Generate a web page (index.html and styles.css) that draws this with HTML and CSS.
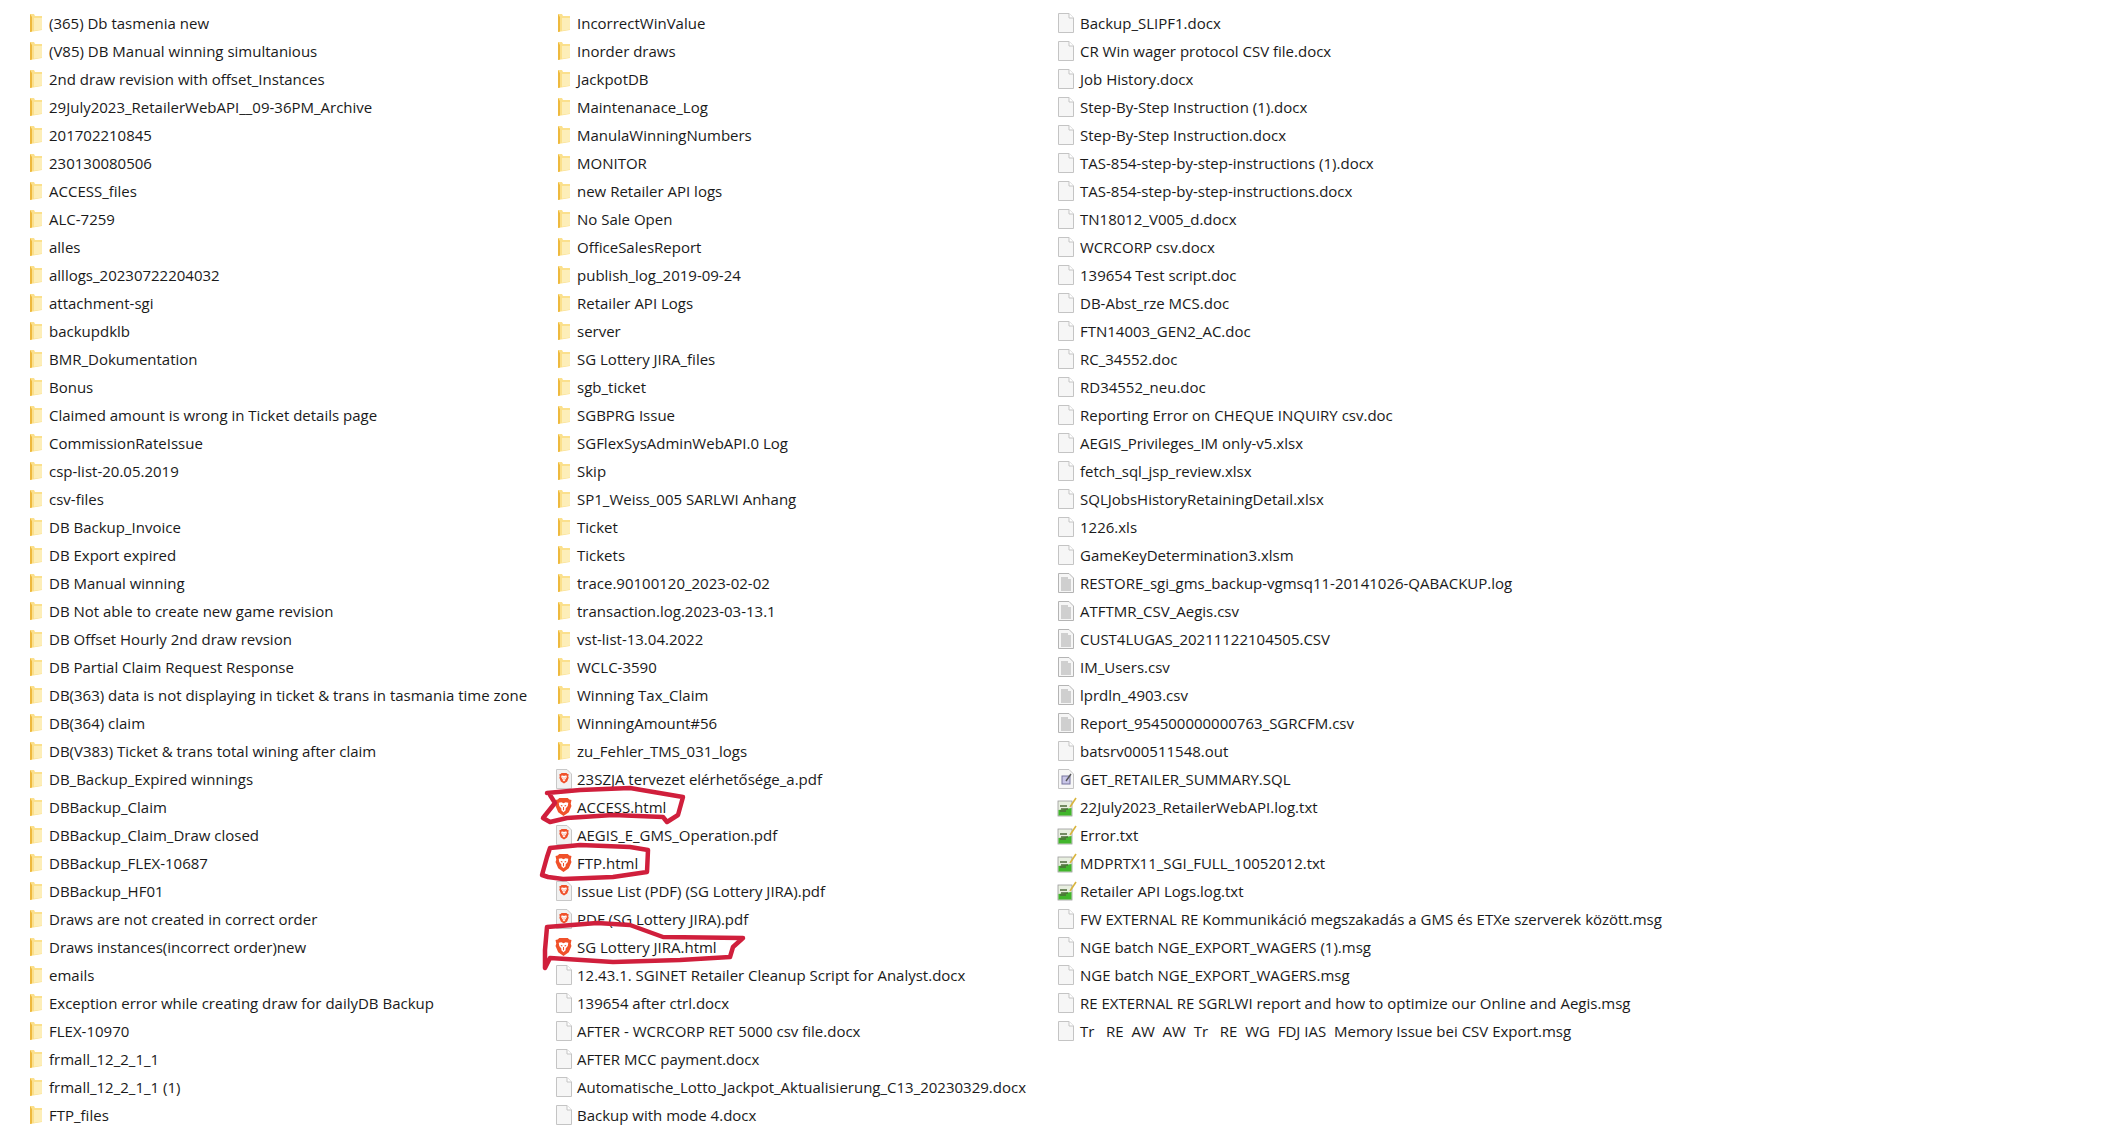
FILE: index.html
```html
<!DOCTYPE html>
<html lang="en">
<head>
    <meta charset="UTF-8">
    <title>Files</title>
    <link rel="stylesheet" href="styles.css">
</head>
<body>

<svg class="defs" width="0" height="0">
    <symbol id="folder" viewBox="0 0 14 20">
        <path d="M1 1 L5 1 L6 3 L13 3 L13 17 L1 19 Z" fill="#fbe08c"/>
        <path d="M1 1 L1 19 L3 18.6 L3 4 L1 1 Z" fill="#eeb93e"/>
        <path d="M5 5 L13 5 L13 16.5 L5 17.8 Z" fill="#fdeeb8"/>
    </symbol>
    <symbol id="doc" viewBox="0 0 16 20">
        <path d="M.5.5 H11 L15.5 5 V19.5 H.5 Z" fill="#f6f6f6" stroke="#c4c4c4"/>
        <path d="M11 .5 V5 H15.5" fill="#fff" stroke="#c4c4c4"/>
    </symbol>
    <symbol id="lines" viewBox="0 0 16 20">
        <path d="M.5.5 H11 L15.5 5 V19.5 H.5 Z" fill="#f6f6f6" stroke="#b4b4b4"/>
        <path d="M3 5 H10 M3 7 H13 M3 9 H13 M3 11 H13 M3 13 H13 M3 15 H13 M3 17 H13" stroke="#a8a8a8"/>
    </symbol>
    <symbol id="sql" viewBox="0 0 16 20">
        <path d="M.5.5 H11 L15.5 5 V19.5 H.5 Z" fill="#f6f6f6" stroke="#c4c4c4"/>
        <rect x="4" y="7" width="8" height="8" fill="#c9c6e8" stroke="#77749e"/>
        <path d="M8 12 L13 5" stroke="#555" stroke-width="1.4"/>
    </symbol>
    <symbol id="shield" viewBox="0 0 16 18">
        <path d="M4 .5 H12 L13.5 2 L15.5 2.5 L14.8 6 L15.5 8 L13 14 L8 17.5 L3 14 L.5 8 L1.2 6 L.5 2.5 L2.5 2 Z" fill="#f0512a"/>
        <path d="M3.5 5 L6 4.5 L8 5.5 L10 4.5 L12.5 5 L12 8 L10 10.5 L10 12 L8 14 L6 12 L6 10.5 L4 8 Z" fill="#fff"/>
        <path d="M5.5 7.5 L7 8 M10.5 7.5 L9 8 M8 9 V12" stroke="#f0512a"/>
    </symbol>
    <symbol id="pdf" viewBox="0 0 16 20">
        <path d="M.5.5 H11 L15.5 5 V19.5 H.5 Z" fill="#f1f1f1" stroke="#c8c8c8"/>
        <use href="#shield" x="3" y="3.5" width="10" height="11.5"/>
    </symbol>
    <symbol id="txt" viewBox="0 0 20 20">
        <rect x="1" y="4" width="14" height="15" fill="#e8efe0" stroke="#9a9a9a" stroke-width=".8"/>
        <path d="M1.5 13 L14.5 11 V18.5 H1.5 Z" fill="#41b52c"/>
        <path d="M3 9 H10 M4 12 H11 M3 14 H9" stroke="#4d6b3a" stroke-width="1.3"/>
        <path d="M13 10 L19 1" stroke="#d9b53e" stroke-width="1.6"/>
    </symbol>
</svg>

<main class="columns">
    <ul class="col col-one">
        <li><svg class="ico"><use href="#folder"/></svg>(365) Db tasmenia new</li>
        <li><svg class="ico"><use href="#folder"/></svg>(V85) DB Manual winning simultanious</li>
        <li><svg class="ico"><use href="#folder"/></svg>2nd draw revision with offset_Instances</li>
        <li><svg class="ico"><use href="#folder"/></svg>29July2023_RetailerWebAPI__09-36PM_Archive</li>
        <li><svg class="ico"><use href="#folder"/></svg>201702210845</li>
        <li><svg class="ico"><use href="#folder"/></svg>230130080506</li>
        <li><svg class="ico"><use href="#folder"/></svg>ACCESS_files</li>
        <li><svg class="ico"><use href="#folder"/></svg>ALC-7259</li>
        <li><svg class="ico"><use href="#folder"/></svg>alles</li>
        <li><svg class="ico"><use href="#folder"/></svg>alllogs_20230722204032</li>
        <li><svg class="ico"><use href="#folder"/></svg>attachment-sgi</li>
        <li><svg class="ico"><use href="#folder"/></svg>backupdklb</li>
        <li><svg class="ico"><use href="#folder"/></svg>BMR_Dokumentation</li>
        <li><svg class="ico"><use href="#folder"/></svg>Bonus</li>
        <li><svg class="ico"><use href="#folder"/></svg>Claimed amount is wrong in Ticket details page</li>
        <li><svg class="ico"><use href="#folder"/></svg>CommissionRateIssue</li>
        <li><svg class="ico"><use href="#folder"/></svg>csp-list-20.05.2019</li>
        <li><svg class="ico"><use href="#folder"/></svg>csv-files</li>
        <li><svg class="ico"><use href="#folder"/></svg>DB Backup_Invoice</li>
        <li><svg class="ico"><use href="#folder"/></svg>DB Export expired</li>
        <li><svg class="ico"><use href="#folder"/></svg>DB Manual winning</li>
        <li><svg class="ico"><use href="#folder"/></svg>DB Not able to create new game revision</li>
        <li><svg class="ico"><use href="#folder"/></svg>DB Offset Hourly 2nd draw revsion</li>
        <li><svg class="ico"><use href="#folder"/></svg>DB Partial Claim Request Response</li>
        <li><svg class="ico"><use href="#folder"/></svg>DB(363) data is not displaying in ticket &amp; trans in tasmania time zone</li>
        <li><svg class="ico"><use href="#folder"/></svg>DB(364) claim</li>
        <li><svg class="ico"><use href="#folder"/></svg>DB(V383) Ticket &amp; trans total wining after claim</li>
        <li><svg class="ico"><use href="#folder"/></svg>DB_Backup_Expired winnings</li>
        <li><svg class="ico"><use href="#folder"/></svg>DBBackup_Claim</li>
        <li><svg class="ico"><use href="#folder"/></svg>DBBackup_Claim_Draw closed</li>
        <li><svg class="ico"><use href="#folder"/></svg>DBBackup_FLEX-10687</li>
        <li><svg class="ico"><use href="#folder"/></svg>DBBackup_HF01</li>
        <li><svg class="ico"><use href="#folder"/></svg>Draws are not created in correct order</li>
        <li><svg class="ico"><use href="#folder"/></svg>Draws instances(incorrect order)new</li>
        <li><svg class="ico"><use href="#folder"/></svg>emails</li>
        <li><svg class="ico"><use href="#folder"/></svg>Exception error while creating draw for dailyDB Backup</li>
        <li><svg class="ico"><use href="#folder"/></svg>FLEX-10970</li>
        <li><svg class="ico"><use href="#folder"/></svg>frmall_12_2_1_1</li>
        <li><svg class="ico"><use href="#folder"/></svg>frmall_12_2_1_1 (1)</li>
        <li><svg class="ico"><use href="#folder"/></svg>FTP_files</li>
    </ul>

    <ul class="col col-two">
        <li><svg class="ico"><use href="#folder"/></svg>IncorrectWinValue</li>
        <li><svg class="ico"><use href="#folder"/></svg>Inorder draws</li>
        <li><svg class="ico"><use href="#folder"/></svg>JackpotDB</li>
        <li><svg class="ico"><use href="#folder"/></svg>Maintenanace_Log</li>
        <li><svg class="ico"><use href="#folder"/></svg>ManulaWinningNumbers</li>
        <li><svg class="ico"><use href="#folder"/></svg>MONITOR</li>
        <li><svg class="ico"><use href="#folder"/></svg>new Retailer API logs</li>
        <li><svg class="ico"><use href="#folder"/></svg>No Sale Open</li>
        <li><svg class="ico"><use href="#folder"/></svg>OfficeSalesReport</li>
        <li><svg class="ico"><use href="#folder"/></svg>publish_log_2019-09-24</li>
        <li><svg class="ico"><use href="#folder"/></svg>Retailer API Logs</li>
        <li><svg class="ico"><use href="#folder"/></svg>server</li>
        <li><svg class="ico"><use href="#folder"/></svg>SG Lottery JIRA_files</li>
        <li><svg class="ico"><use href="#folder"/></svg>sgb_ticket</li>
        <li><svg class="ico"><use href="#folder"/></svg>SGBPRG Issue</li>
        <li><svg class="ico"><use href="#folder"/></svg>SGFlexSysAdminWebAPI.0 Log</li>
        <li><svg class="ico"><use href="#folder"/></svg>Skip</li>
        <li><svg class="ico"><use href="#folder"/></svg>SP1_Weiss_005 SARLWI Anhang</li>
        <li><svg class="ico"><use href="#folder"/></svg>Ticket</li>
        <li><svg class="ico"><use href="#folder"/></svg>Tickets</li>
        <li><svg class="ico"><use href="#folder"/></svg>trace.90100120_2023-02-02</li>
        <li><svg class="ico"><use href="#folder"/></svg>transaction.log.2023-03-13.1</li>
        <li><svg class="ico"><use href="#folder"/></svg>vst-list-13.04.2022</li>
        <li><svg class="ico"><use href="#folder"/></svg>WCLC-3590</li>
        <li><svg class="ico"><use href="#folder"/></svg>Winning Tax_Claim</li>
        <li><svg class="ico"><use href="#folder"/></svg>WinningAmount#56</li>
        <li><svg class="ico"><use href="#folder"/></svg>zu_Fehler_TMS_031_logs</li>
        <li><svg class="ico"><use href="#pdf"/></svg>23SZJA tervezet elérhetősége_a.pdf</li>
        <li><svg class="ico ico-brave"><use href="#shield"/></svg>ACCESS.html</li>
        <li><svg class="ico"><use href="#pdf"/></svg>AEGIS_E_GMS_Operation.pdf</li>
        <li><svg class="ico ico-brave"><use href="#shield"/></svg>FTP.html</li>
        <li><svg class="ico"><use href="#pdf"/></svg>Issue List (PDF) (SG Lottery JIRA).pdf</li>
        <li><svg class="ico"><use href="#pdf"/></svg>PDF (SG Lottery JIRA).pdf</li>
        <li><svg class="ico ico-brave"><use href="#shield"/></svg>SG Lottery JIRA.html</li>
        <li><svg class="ico"><use href="#doc"/></svg>12.43.1. SGINET Retailer Cleanup Script for Analyst.docx</li>
        <li><svg class="ico"><use href="#doc"/></svg>139654 after ctrl.docx</li>
        <li><svg class="ico"><use href="#doc"/></svg>AFTER - WCRCORP RET 5000 csv file.docx</li>
        <li><svg class="ico"><use href="#doc"/></svg>AFTER MCC payment.docx</li>
        <li><svg class="ico"><use href="#doc"/></svg>Automatische_Lotto_Jackpot_Aktualisierung_C13_20230329.docx</li>
        <li><svg class="ico"><use href="#doc"/></svg>Backup with mode 4.docx</li>
    </ul>

    <ul class="col col-three">
        <li><svg class="ico"><use href="#doc"/></svg>Backup_SLIPF1.docx</li>
        <li><svg class="ico"><use href="#doc"/></svg>CR Win wager protocol CSV file.docx</li>
        <li><svg class="ico"><use href="#doc"/></svg>Job History.docx</li>
        <li><svg class="ico"><use href="#doc"/></svg>Step-By-Step Instruction (1).docx</li>
        <li><svg class="ico"><use href="#doc"/></svg>Step-By-Step Instruction.docx</li>
        <li><svg class="ico"><use href="#doc"/></svg>TAS-854-step-by-step-instructions (1).docx</li>
        <li><svg class="ico"><use href="#doc"/></svg>TAS-854-step-by-step-instructions.docx</li>
        <li><svg class="ico"><use href="#doc"/></svg>TN18012_V005_d.docx</li>
        <li><svg class="ico"><use href="#doc"/></svg>WCRCORP csv.docx</li>
        <li><svg class="ico"><use href="#doc"/></svg>139654 Test script.doc</li>
        <li><svg class="ico"><use href="#doc"/></svg>DB-Abst_rze MCS.doc</li>
        <li><svg class="ico"><use href="#doc"/></svg>FTN14003_GEN2_AC.doc</li>
        <li><svg class="ico"><use href="#doc"/></svg>RC_34552.doc</li>
        <li><svg class="ico"><use href="#doc"/></svg>RD34552_neu.doc</li>
        <li><svg class="ico"><use href="#doc"/></svg>Reporting Error on CHEQUE INQUIRY csv.doc</li>
        <li><svg class="ico"><use href="#doc"/></svg>AEGIS_Privileges_IM only-v5.xlsx</li>
        <li><svg class="ico"><use href="#doc"/></svg>fetch_sql_jsp_review.xlsx</li>
        <li><svg class="ico"><use href="#doc"/></svg>SQLJobsHistoryRetainingDetail.xlsx</li>
        <li><svg class="ico"><use href="#doc"/></svg>1226.xls</li>
        <li><svg class="ico"><use href="#doc"/></svg>GameKeyDetermination3.xlsm</li>
        <li><svg class="ico"><use href="#lines"/></svg>RESTORE_sgi_gms_backup-vgmsq11-20141026-QABACKUP.log</li>
        <li><svg class="ico"><use href="#lines"/></svg>ATFTMR_CSV_Aegis.csv</li>
        <li><svg class="ico"><use href="#lines"/></svg>CUST4LUGAS_20211122104505.CSV</li>
        <li><svg class="ico"><use href="#lines"/></svg>IM_Users.csv</li>
        <li><svg class="ico"><use href="#lines"/></svg>lprdln_4903.csv</li>
        <li><svg class="ico"><use href="#lines"/></svg>Report_954500000000763_SGRCFM.csv</li>
        <li><svg class="ico"><use href="#doc"/></svg>batsrv000511548.out</li>
        <li><svg class="ico"><use href="#sql"/></svg>GET_RETAILER_SUMMARY.SQL</li>
        <li><svg class="ico ico-txt"><use href="#txt"/></svg>22July2023_RetailerWebAPI.log.txt</li>
        <li><svg class="ico ico-txt"><use href="#txt"/></svg>Error.txt</li>
        <li><svg class="ico ico-txt"><use href="#txt"/></svg>MDPRTX11_SGI_FULL_10052012.txt</li>
        <li><svg class="ico ico-txt"><use href="#txt"/></svg>Retailer API Logs.log.txt</li>
        <li><svg class="ico"><use href="#doc"/></svg>FW EXTERNAL RE Kommunikáció megszakadás a GMS és ETXe szerverek között.msg</li>
        <li><svg class="ico"><use href="#doc"/></svg>NGE batch NGE_EXPORT_WAGERS (1).msg</li>
        <li><svg class="ico"><use href="#doc"/></svg>NGE batch NGE_EXPORT_WAGERS.msg</li>
        <li><svg class="ico"><use href="#doc"/></svg>RE EXTERNAL RE SGRLWI report and how to optimize our Online and Aegis.msg</li>
        <li><svg class="ico"><use href="#doc"/></svg>Tr&nbsp;&nbsp; RE&nbsp; AW&nbsp; AW&nbsp; Tr&nbsp;&nbsp; RE&nbsp; WG&nbsp; FDJ IAS&nbsp; Memory Issue bei CSV Export.msg</li>
    </ul>
</main>

<!-- red marker scribbles on top of the list -->
<svg class="scribbles" viewBox="0 0 2120 1142">
    <path d="M547 793 L580 790 L630 788 L683 797 L678 815 L667 822 L663 817 L613 815 L567 818 L550 822 L543 818 L555 803 L550 795"/>
    <path d="M550 848 L580 845 L630 847 L648 850 L647 872 L613 877 L563 879 L548 877 L542 875 L547 857 L550 848"/>
    <path d="M547 927 L597 923 L630 925 L663 937 L743 938 L733 947 L730 957 L680 960 L613 962 L550 958 L545 968 L545 950 L547 927"/>
</svg>

</body>
</html>
```

FILE: styles.css
```css
body {
    margin: 0;
    background-color: white;
    color: #1a1a1a;
    font-family: "Open Sans", "Noto Sans", sans-serif;
    font-size: 15px;
    height: 1142px;
    overflow: hidden;
}
.defs {
    position: absolute;
}
.columns {
    display: flex;
    padding-top: 9px;
    padding-left: 28px;
}
.col {
    list-style: none;
    margin: 0;
    padding: 0;
}
.col-one {
    width: 528px;
}
.col-two {
    width: 502px;
}
.col li {
    display: flex;
    align-items: center;
    height: 28px;
    white-space: pre;
}
.ico {
    width: 16px;
    height: 20px;
    margin-right: 5px;
    flex: none;
}
.col-three .ico {
    margin-right: 6px;
}
.ico-brave {
    width: 17px;
    margin-left: -1px;
}
.col-three .ico-txt {
    width: 20px;
    margin-left: -1px;
    margin-right: 3px;
}
.scribbles {
    position: absolute;
    left: 0;
    top: 0;
    width: 2120px;
    height: 1142px;
    pointer-events: none;
}
.scribbles path {
    fill: none;
    stroke: #d01f3c;
    stroke-width: 4.5;
    stroke-linejoin: round;
    stroke-linecap: round;
}
```
